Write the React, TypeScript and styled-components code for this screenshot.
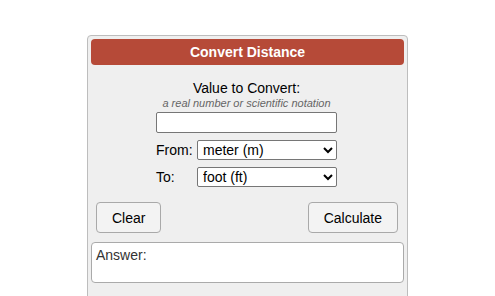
import React from "react";
import styled, { createGlobalStyle } from "styled-components";

const GlobalStyle = createGlobalStyle`
  body {
    margin: 0;
    background: #fff;
    font-family: "Liberation Sans", Arial, sans-serif;
    color: #000;
  }
`;

const App = () => {
  return (
    <>
      <GlobalStyle />
      <Panel>
        <Header>Convert Distance</Header>
        <Body>
          <Label>Value to Convert:</Label>
          <Hint>a real number or scientific notation</Hint>
          <ValueInput type="text" />
          <Row>
            <RowLabel>From:</RowLabel>
            <Select defaultValue="m">
              <option value="m">meter (m)</option>
              <option value="ft">foot (ft)</option>
            </Select>
          </Row>
          <Row>
            <RowLabel>To:</RowLabel>
            <Select defaultValue="ft">
              <option value="m">meter (m)</option>
              <option value="ft">foot (ft)</option>
            </Select>
          </Row>
        </Body>
        <Buttons>
          <Button>Clear</Button>
          <Button>Calculate</Button>
        </Buttons>
        <Answer>Answer:</Answer>
      </Panel>
    </>
  );
};

export default App;

const Panel = styled.div`
  width: 321px;
  box-sizing: border-box;
  margin: 35px auto 0;
  padding: 3px 3px 20px;
  background: #efefef;
  border: 1px solid #bdbdbd;
  border-radius: 4px;
`;

const Header = styled.div`
  height: 26px;
  line-height: 26px;
  background: #b64a38;
  border-radius: 4px;
  color: #fff;
  font-size: 14px;
  font-weight: 700;
  text-align: center;
`;

const Body = styled.div`
  display: flex;
  flex-direction: column;
  align-items: center;
  padding: 15px 2px 0 0;
`;

const Label = styled.div`
  font-size: 14px;
  line-height: 16px;
`;

const Hint = styled.div`
  font-size: 11px;
  font-style: italic;
  color: #666;
  line-height: 13px;
  margin-top: 1px;
`;

const ValueInput = styled.input`
  box-sizing: border-box;
  width: 181px;
  height: 21px;
  margin-top: 2px;
  border: 1px solid #767676;
  border-radius: 2px;
  background: #fff;
`;

const Row = styled.div`
  display: flex;
  align-items: center;
  width: 181px;
  margin-top: 7px;
`;

const RowLabel = styled.span`
  width: 41px;
  font-size: 14px;
`;

const Select = styled.select`
  box-sizing: border-box;
  width: 140px;
  height: 20px;
  padding: 0 0 0 1px;
  font-family: "Liberation Sans", Arial, sans-serif;
  font-size: 14px;
  color: #000;
  background: #fff;
  border: 1px solid #767676;
  border-radius: 2px;
`;

const Buttons = styled.div`
  display: flex;
  justify-content: space-between;
  padding: 0 6px 0 5px;
  margin-top: 15px;
`;

const Button = styled.button`
  height: 31px;
  padding: 0 15px;
  font-family: "Liberation Sans", Arial, sans-serif;
  font-size: 14px;
  color: #000;
  background: #f3f3f3;
  border: 1px solid #a9a9a9;
  border-radius: 4px;
`;

const Answer = styled.div`
  box-sizing: border-box;
  height: 41px;
  margin-top: 9px;
  padding: 4px 4px;
  background: #fff;
  border: 1px solid #aaa;
  border-radius: 4px;
  font-size: 14px;
  color: #333;
`;
